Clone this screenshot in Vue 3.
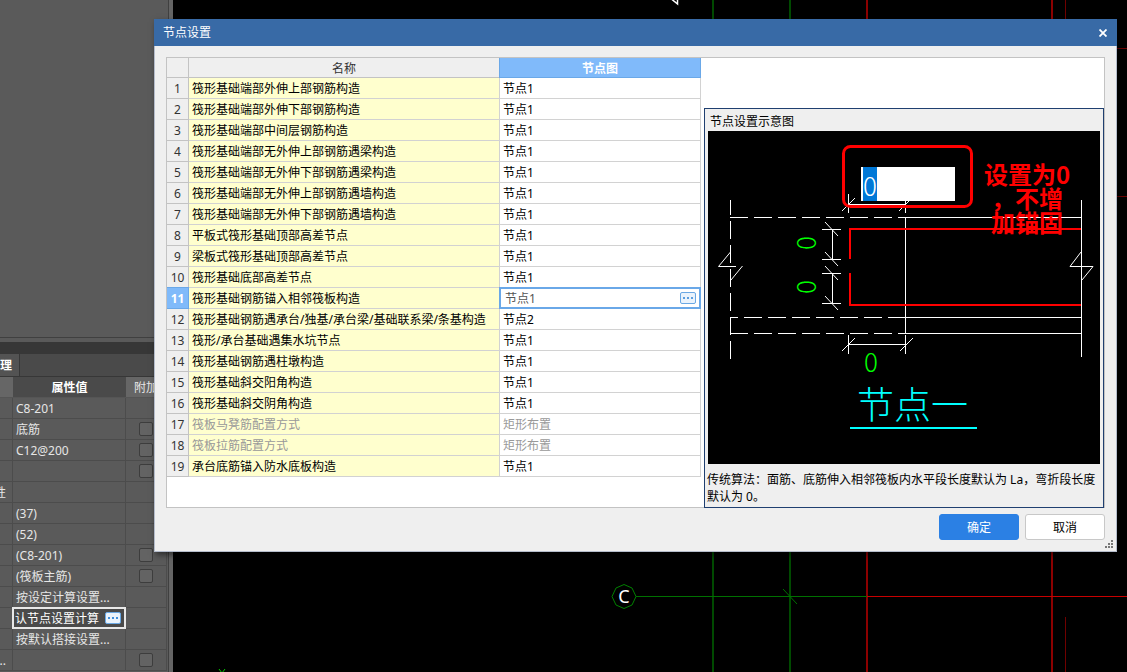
<script setup>
import { onMounted, ref } from 'vue'

const properties = ref([
  { group: '', value: 'C8-201' },
  { group: '', value: '底筋', check: true },
  { group: '', value: 'C12@200', check: true },
  { group: '', value: '', check: true },
  { group: '性', value: '' },
  { group: '', value: '(37)' },
  { group: '', value: '(52)' },
  { group: '', value: '(C8-201)', check: true },
  { group: '', value: '(筏板主筋)', check: true },
  { group: '', value: '按设定计算设置...' },
  { group: '', value: '认节点设置计算', editing: true },
  { group: '', value: '按默认搭接设置...' },
  { group: '...', value: '', check: true }
])

const nodes = ref([
  { name: '筏形基础端部外伸上部钢筋构造', node: '节点1' },
  { name: '筏形基础端部外伸下部钢筋构造', node: '节点1' },
  { name: '筏形基础端部中间层钢筋构造', node: '节点1' },
  { name: '筏形基础端部无外伸上部钢筋遇梁构造', node: '节点1' },
  { name: '筏形基础端部无外伸下部钢筋遇梁构造', node: '节点1' },
  { name: '筏形基础端部无外伸上部钢筋遇墙构造', node: '节点1' },
  { name: '筏形基础端部无外伸下部钢筋遇墙构造', node: '节点1' },
  { name: '平板式筏形基础顶部高差节点', node: '节点1' },
  { name: '梁板式筏形基础顶部高差节点', node: '节点1' },
  { name: '筏形基础底部高差节点', node: '节点1' },
  { name: '筏形基础钢筋锚入相邻筏板构造', node: '节点1', selected: true },
  { name: '筏形基础钢筋遇承台/独基/承台梁/基础联系梁/条基构造', node: '节点2' },
  { name: '筏形/承台基础遇集水坑节点', node: '节点1' },
  { name: '筏形基础钢筋遇柱墩构造', node: '节点1' },
  { name: '筏形基础斜交阳角构造', node: '节点1' },
  { name: '筏形基础斜交阴角构造', node: '节点1' },
  { name: '筏板马凳筋配置方式', node: '矩形布置', disabled: true },
  { name: '筏板拉筋配置方式', node: '矩形布置', disabled: true },
  { name: '承台底筋锚入防水底板构造', node: '节点1' }
])

const anchorLength = ref('0')
const anchorInput = ref(null)

onMounted(() => {
  anchorInput.value.focus()
  anchorInput.value.select()
})
</script>

<template>
  <div class="app">
    <aside class="sidebar">
      <div class="panel-space"></div>
      <div class="panel-band"></div>
      <div class="tabs"><button type="button" class="tab">理</button></div>
      <table class="props">
        <colgroup><col class="p-group" /><col class="p-value" /><col class="p-extra" /></colgroup>
        <thead>
          <tr><th></th><th class="current">属性值</th><th class="extra">附加</th></tr>
        </thead>
        <tbody>
          <tr v-for="(p, i) in properties" :key="i">
            <td class="group"><div>{{ p.group }}</div></td>
            <td :class="{ editing: p.editing }">
              <div v-if="p.editing" class="editor">
                <input v-model="p.value" type="text" aria-label="节点设置属性值" />
                <button type="button" class="more" aria-label="更多">
                  <svg viewBox="0 0 10 2" width="10" height="2"><path d="M0 0h2v2H0zM4 0h2v2H4zM8 0h2v2H8z" fill="#3f8edb" /></svg>
                </button>
              </div>
              <template v-else>{{ p.value }}</template>
            </td>
            <td class="tick"><input v-if="p.check" type="checkbox" :aria-label="'附加 ' + p.value" /></td>
          </tr>
        </tbody>
      </table>
    </aside>

    <main class="canvas">
      <svg width="954" height="672" fill="none">
        <path d="M496 -3L504.500 4V-2" stroke="#fff" stroke-width="1.500" />
        <path d="M540 0V672M617 0V672" stroke="#004a00" stroke-width="2" />
        <path d="M694 0V672M879 0V672" stroke="#8c0000" stroke-width="2" />
        <path d="M892.500 0V60M892.500 617V672M943 48.500H954M943 196.500H954" stroke="#700000" />
        <path d="M463 596.500H694" stroke="#007000" />
        <path d="M694 596.500H954" stroke="#c80000" />
        <path d="M610 589L624 604" stroke="#007000" />
        <path d="M451 584.500L459 588L463 596.500L459 605L451 608.500L443 605L439 596.500L443 588Z" stroke="#008000" />
        <path d="M46 669L49 673L52 669" stroke="#00c800" />
        <text x="451" y="603" text-anchor="middle" class="axis">C</text>
      </svg>
    </main>

    <section class="dialog" role="dialog" aria-labelledby="dialog-title">
      <header class="titlebar">
        <h1 id="dialog-title">节点设置</h1>
        <button type="button" class="close" aria-label="关闭">
          <svg width="8" height="8" viewBox="0 0 8 8"><path d="M.5 .5L7.500 7.500M7.500 .5L.5 7.500" stroke="#fff" stroke-width="1.800" /></svg>
        </button>
      </header>
      <div class="body">
        <div class="frame">
          <table class="nodes">
            <colgroup><col class="n-index" /><col class="n-name" /><col class="n-node" /></colgroup>
            <thead>
              <tr><th></th><th>名称</th><th class="active">节点图</th></tr>
            </thead>
            <tbody>
              <tr v-for="(n, i) in nodes" :key="i" :class="{ selected: n.selected, disabled: n.disabled }">
                <th>{{ i + 1 }}</th>
                <td class="name">{{ n.name }}</td>
                <td class="node">
                  <div v-if="n.selected" class="cell-editor">
                    <input v-model="n.node" type="text" :aria-label="n.name" />
                    <button type="button" class="more" aria-label="选择节点">
                      <svg viewBox="0 0 10 2" width="10" height="2"><path d="M0 0h2v2H0zM4 0h2v2H4zM8 0h2v2H8z" fill="#5c9ede" /></svg>
                    </button>
                  </div>
                  <template v-else>{{ n.node }}</template>
                </td>
              </tr>
            </tbody>
          </table>

          <figure class="preview">
            <h2>节点设置示意图</h2>
            <svg class="drawing" viewBox="0 0 392 333" fill="none">
              <rect width="392" height="333" fill="#000" />
              <g stroke="#fff">
                <path d="M22.500 69V228" stroke-dasharray="18 6" stroke-dashoffset="3" />
                <path d="M22 86.500H197M22 202.500H197" stroke-dasharray="18 6" />
                <path d="M22 186.500H197" stroke-dasharray="18 6" stroke-dashoffset="10" />
                <path d="M22.500 186V203M197 86.500H373M197 186.500H373M197 202.500H373M197.500 86V203M373.500 69V226" />
                <path d="M22.500 121L10.500 135.500H28M34.500 135L23 149M373 121L362 135.500H385L374 149" />
                <path d="M140.500 63V82M197.500 69V82M140 73.500H198M134 80L147 67M191 80L204 67" />
                <path d="M140.500 204V223M197.500 204V223M140 213.500H198M134 220L147 207M192 220L205 207" />
                <path d="M124.500 98V129M124.500 142V173M114 98.500H133M114 128.500H133M114 142.500H133M114 172.500H133" />
                <path d="M117 91L130 105M117 121L130 135M117 135L130 149M117 165L130 179" />
              </g>
              <path d="M142 128V98H373M142 142V174H373" stroke="#f00" stroke-width="2" />
              <g class="dimension">
                <text x="163" y="241">0</text>
                <text transform="translate(108 112) rotate(-90)">0</text>
                <text transform="translate(108 156) rotate(-90)">0</text>
              </g>
              <text x="149" y="288" class="caption-cad">节点一</text>
              <path d="M142 297H269" stroke="#0ff" stroke-width="2" />
              <foreignObject x="153" y="36" width="94" height="34">
                <input ref="anchorInput" v-model="anchorLength" class="anchor" type="text" aria-label="锚固长度" />
              </foreignObject>
              <rect x="135.500" y="15.500" width="128" height="60" rx="7" stroke="#f00" stroke-width="3" />
              <g class="note">
                <text x="276" y="53">设置为0</text>
                <text x="283" y="77">，不增</text>
                <text x="283" y="101">加锚固</text>
              </g>
            </svg>
            <figcaption>传统算法：面筋、底筋伸入相邻筏板内水平段长度默认为 La，弯折段长度默认为 0。</figcaption>
          </figure>
        </div>
        <footer class="actions">
          <button type="button" class="primary">确定</button>
          <button type="button">取消</button>
        </footer>
      </div>
      <svg class="grip" width="8" height="8" viewBox="0 0 8 8"><path d="M6 0h2v2H6zM3 3h2v2H3zM6 3h2v2H6zM0 6h2v2H0zM3 6h2v2H3zM6 6h2v2H6z" fill="#777" /></svg>
    </section>
  </div>
</template>

<style>
body { background: #000; }
</style>

<style scoped>
.app {
  position: relative;
  display: flex;
  height: 100vh;
  overflow: hidden;
  background: #000;
  font: 12px/20px "Noto Sans", "Noto Sans CJK SC", sans-serif;
}
.app *, .app { box-sizing: border-box; }
button, input { font: inherit; margin: 0; padding: 0; border: 0; }
h1, h2, figure { margin: 0; font: inherit; }

.sidebar {
  flex: none;
  width: 173px;
  overflow: hidden;
  background: #5a5a5a;
  border-right: 4px solid #646464;
  box-shadow: inset -1px 0 #404040;
}
.panel-space { height: 342px; border-bottom: 4px solid #5a5a5a; box-shadow: inset 0 -1px #404040; }
.panel-band { height: 12px; margin-right: 1px; background: #373737; }
.tabs { height: 23px; margin-right: 1px; background: #4a4a4a; border-bottom: 1px solid #373737; }
.tab {
  display: block;
  width: 20px;
  height: 22px;
  padding-top: 2px;
  text-align: left;
  font-weight: 700;
  color: #fff;
  background: #535353;
  border-right: 1px solid #373737;
}
.props { width: 167px; table-layout: fixed; border-spacing: 0; color: #e6e6e6; }
.p-group { width: 13px; }
.p-value { width: 113px; }
.props th { height: 21px; padding: 2px 0 0; line-height: 18px; background: #666; border-bottom: 1px solid #555; }
.props th.current { background: #4a4a4a; color: #fff; }
.props th.extra { padding-left: 8px; text-align: left; font-weight: 400; }
.props td {
  height: 21px;
  padding: 2px 0 0 3px;
  line-height: 18px;
  white-space: nowrap;
  border-right: 1px solid #4c4c4c;
  border-bottom: 1px solid #4c4c4c;
}
.props td.group { padding: 2px 0 0; }
.group div { display: flex; justify-content: flex-end; overflow: hidden; padding-right: 6px; }
.props td.tick { padding: 0 0 0 13px; }
.tick input {
  display: block;
  appearance: none;
  width: 14px;
  height: 14px;
  background: #636363;
  border: 1px solid #3d3d3d;
  border-radius: 2px;
}
.props td.editing { padding: 0; }
.editor {
  display: flex;
  align-items: center;
  height: 22px;
  margin: -1px;
  padding: 0 3px 0 1px;
  background: #4a4a4a;
  border: 2px solid #e8e8e8;
}
.editor input { flex: 1; min-width: 0; height: 18px; padding-top: 2px; color: #fff; background: transparent; }
.more {
  display: flex;
  flex: none;
  align-items: center;
  justify-content: center;
  width: 16px;
  height: 12px;
  background: #eaf3fc;
  border: 1px solid #6aa8e4;
  border-radius: 2px;
}

.canvas { flex: 1; min-width: 0; overflow: hidden; }
.canvas svg { display: block; }
.axis { font-family: "Noto Sans", sans-serif; font-size: 18px; fill: #fff; }

.dialog {
  position: absolute;
  top: 19px;
  right: 10px;
  left: 154px;
  background: #efefef;
  box-shadow: 2px 3px 6px rgba(0, 0, 0, 0.5);
}
.titlebar {
  display: flex;
  align-items: center;
  justify-content: space-between;
  height: 27px;
  padding: 0 6px 0 9px;
  color: #fff;
  background: #386aa6;
}
.close { display: flex; align-items: center; justify-content: center; width: 16px; height: 16px; background: none; }
.body { padding: 11px; border: 1px solid #b4bccb; border-top: 0; }
.frame { display: flex; align-items: flex-start; background: #fff; border: 1px solid #c3c3c3; }

.nodes { flex: none; width: 534px; table-layout: fixed; border-spacing: 0; color: #000; }
.n-index { width: 22px; }
.n-name { width: 311px; }
.nodes th, .nodes td { padding: 2px 0 0; white-space: nowrap; border-right: 1px solid #d2d2d2; border-bottom: 1px solid #d2d2d2; }
.nodes th { font-weight: 400; color: #333; background: #efefef; border-color: #c3c3c3; }
.nodes thead th { height: 20px; line-height: 17px; }
.nodes thead th.active { font-weight: 700; color: #fff; background: #80bafa; border-color: #6aa8e8; box-shadow: -1px 0 #6aa8e8; }
.nodes tbody th, .nodes tbody td { height: 21px; line-height: 18px; }
.nodes .name { padding-left: 3px; background: #ffffce; }
.nodes .node { padding-left: 3px; }
.disabled td { color: #999; }
.nodes .selected th { font-weight: 700; color: #fff; background: #80bafa; border-color: #6aa8e8; box-shadow: 0 -1px #6aa8e8; }
.nodes .selected .node { padding: 0; }
.cell-editor {
  display: flex;
  align-items: center;
  height: 22px;
  margin: -1px;
  padding: 0 3px 0 4px;
  background: #fff;
  border: 2px solid #6aa8e8;
}
.cell-editor input { flex: 1; min-width: 0; height: 18px; padding-top: 2px; color: #555; background: transparent; }

.preview {
  flex: 1;
  min-width: 0;
  margin: 50px 0 -1px 3px;
  background: #efefef;
  border: 1px solid #1f3f70;
}
.preview h2 { padding: 4px 5px 0; line-height: 18px; color: #000; }
.drawing { display: block; width: calc(100% - 6px); margin: 0 3px; }
.anchor {
  display: block;
  width: 94px;
  height: 34px;
  padding: 0 2px;
  font: 300 26px/28px "Noto Sans CJK SC", sans-serif;
  background: #fff;
  border-radius: 0;
  outline: none;
}
.anchor::selection { color: #fff; background: #0078d7; }
.dimension { font-family: "Noto Sans CJK SC", sans-serif; font-size: 26px; font-weight: 300; fill: #0f0; text-anchor: middle; }
.caption-cad { font-family: "Noto Sans CJK SC", sans-serif; font-size: 37px; font-weight: 300; fill: #0ff; }
.note { font-family: "Noto Sans CJK SC", sans-serif; font-size: 24px; font-weight: 700; fill: #f00; }
figcaption { padding: 7px 2px 2px; line-height: 17px; color: #000; }

.actions { display: flex; justify-content: flex-end; gap: 6px; margin-top: 6px; }
.actions button { width: 80px; height: 26px; padding-top: 2px; color: #000; background: #fff; border: 1px solid #c8c8c8; border-radius: 3px; }
.actions .primary { color: #fff; background: #2b80e4; border-color: #2b80e4; }
.grip { position: absolute; right: 4px; bottom: 4px; }
</style>
